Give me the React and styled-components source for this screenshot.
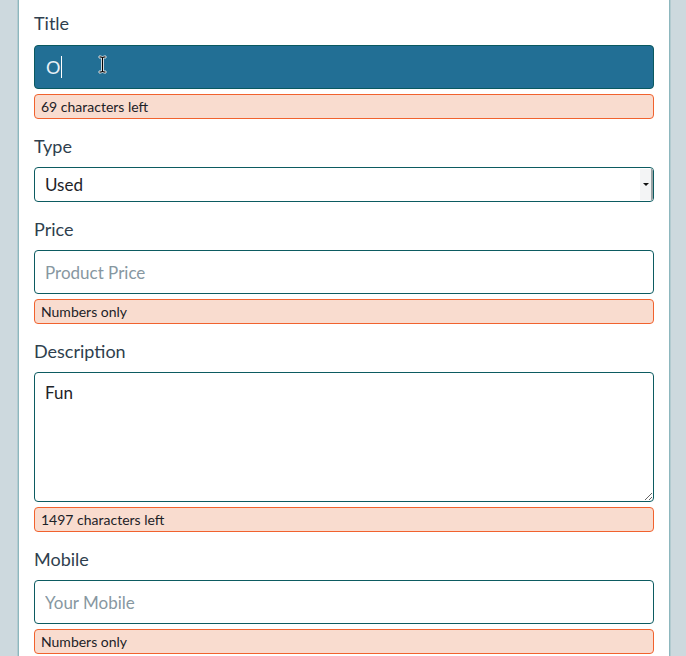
import React from 'react'
import styled, { createGlobalStyle } from 'styled-components'

const GlobalStyle = createGlobalStyle`
    html, body {
        margin: 0;
        padding: 0;
        background: #cdd9de;
        overflow: hidden;
        font-family: Lato, "Open Sans", sans-serif;
    }
`

const Page = styled.div`
    padding: 0 16px 0 18px;
    height: 656px;
`

const Card = styled.div`
    background: #ffffff;
    border-left: 1px solid #8db7be;
    border-right: 1px solid #8db7be;
    box-shadow: 1px 0 0 #b3cbd0, -1px 0 0 #b3cbd0;
    padding: 11px 15px 40px;
    display: flex;
    flex-direction: column;
    gap: 15px;
`

const Group = styled.div`
    display: flex;
    flex-direction: column;
`

const Label = styled.label`
    font-size: 18px;
    line-height: 24px;
    color: #2f3f4e;
    margin-bottom: ${({ $first }) => ($first ? '10px' : '9px')};
`

const Field = styled.input`
    box-sizing: border-box;
    width: 100%;
    height: 44px;
    border: 1px solid #0c5b61;
    border-radius: 4px;
    padding: 0 10px;
    font-family: Lato, "Open Sans", sans-serif;
    font-size: 17px;
    color: #1e2328;
    background: #fff;
    outline: none;
    &::placeholder {
        color: #8797a1;
    }
`

const FocusedField = styled.div`
    position: relative;
    box-sizing: border-box;
    height: 44px;
    border: 1px solid #0a5960;
    border-radius: 4px;
    background: #226f95;
    padding: 0 11px;
    display: flex;
    align-items: center;
    font-size: 18px;
    color: #e9f1f6;
`

const Caret = styled.span`
    display: inline-block;
    width: 1px;
    height: 22px;
    background: #ffffff;
    margin-left: 1px;
`

const Pointer = styled.svg`
    position: absolute;
    left: 63px;
    top: 9px;
`

const SelectBox = styled.div`
    box-sizing: border-box;
    height: 35px;
    border: 1px solid #0c5b61;
    border-radius: 4px;
    display: flex;
    overflow: hidden;
`

const Select = styled.select`
    flex: 1;
    appearance: none;
    border: none;
    background: transparent;
    padding: 0 10px;
    font-family: Lato, "Open Sans", sans-serif;
    font-size: 17px;
    color: #1e2328;
    outline: none;
`

const ArrowCell = styled.div`
    width: 11px;
    margin: 1px 0;
    background: #f3f4f5;
    border-right: 2px solid #9aa2a4;
    display: flex;
    align-items: center;
    justify-content: center;
`

const Arrow = styled.span`
    width: 0;
    height: 0;
    border-left: 3px solid transparent;
    border-right: 3px solid transparent;
    border-top: 3px solid #111;
`

const TextArea = styled.textarea`
    box-sizing: border-box;
    width: 100%;
    height: 130px;
    border: 1px solid #0c5b61;
    border-radius: 4px;
    padding: 9px 10px;
    font-family: Lato, "Open Sans", sans-serif;
    font-size: 17px;
    color: #1e2328;
    outline: none;
    resize: vertical;
`

const Hint = styled.div`
    box-sizing: border-box;
    height: 25px;
    margin-top: 5px;
    padding: 0 6px;
    display: flex;
    align-items: center;
    background: #f9dccf;
    border: 1px solid #f1622e;
    border-radius: 4px;
    font-size: 14px;
    color: #1d2227;
`

export default function App() {
    return (
        <Page>
            <GlobalStyle />
            <Card>
                <Group>
                    <Label $first>Title</Label>
                    <FocusedField>
                        O<Caret />
                        <Pointer width="9" height="19" viewBox="0 0 9 19">
                            <path d="M1 1h2.5l1 1 1-1H8v2H5.5v13H8v2H5.5l-1-1-1 1H1v-2h2.5V3H1z" fill="#000" stroke="#fff" strokeWidth="0.8" />
                        </Pointer>
                    </FocusedField>
                    <Hint>69 characters left</Hint>
                </Group>
                <Group>
                    <Label>Type</Label>
                    <SelectBox>
                        <Select defaultValue="used">
                            <option value="new">New</option>
                            <option value="used">Used</option>
                        </Select>
                        <ArrowCell><Arrow /></ArrowCell>
                    </SelectBox>
                </Group>
                <Group>
                    <Label>Price</Label>
                    <Field placeholder="Product Price" />
                    <Hint>Numbers only</Hint>
                </Group>
                <Group>
                    <Label>Description</Label>
                    <TextArea defaultValue="Fun" />
                    <Hint>1497 characters left</Hint>
                </Group>
                <Group>
                    <Label>Mobile</Label>
                    <Field placeholder="Your Mobile" />
                    <Hint>Numbers only</Hint>
                </Group>
            </Card>
        </Page>
    )
}
